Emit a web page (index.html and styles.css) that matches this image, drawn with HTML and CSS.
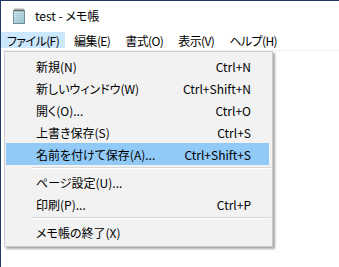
FILE: index.html
```html
<!DOCTYPE html>
<html>
<head>
    <meta charset="utf-8">
    <title>test - メモ帳</title>
    <link rel="stylesheet" href="styles.css">
</head>
<body>
<div class="window">
    <div class="titlebar">
        <svg class="appicon" width="14" height="16" viewBox="0 0 14 16">
            <defs>
                <linearGradient id="pad" x1="0" y1="0" x2="1" y2="1">
                    <stop offset="0" stop-color="#d9eef3"/>
                    <stop offset="1" stop-color="#8fc0cf"/>
                </linearGradient>
            </defs>
            <rect x="1.5" y="2.5" width="11" height="13" fill="url(#pad)" stroke="#6f8f9a"/>
            <path d="M3 5.5h8M3 7.5h8M3 9.5h8M3 11.5h8M3 13.5h6" stroke="#a9c9d2" stroke-width="0.8"/>
            <path d="M3 0.5v3M5 0.5v3M7 0.5v3M9 0.5v3M11 0.5v3" stroke="#555" stroke-width="1"/>
        </svg>
        <span class="title">test - メモ帳</span>
    </div>
    <nav class="menubar">
        <span class="menu active">ファイル(F)</span>
        <span class="menu">編集(E)</span>
        <span class="menu">書式(O)</span>
        <span class="menu">表示(V)</span>
        <span class="menu">ヘルプ(H)</span>
    </nav>
    <main class="editor"></main>

    <div class="dropdown">
        <div class="item"><span>新規(N)</span><span>Ctrl+N</span></div>
        <div class="item"><span>新しいウィンドウ(W)</span><span>Ctrl+Shift+N</span></div>
        <div class="item"><span>開く(O)...</span><span>Ctrl+O</span></div>
        <div class="item"><span>上書き保存(S)</span><span>Ctrl+S</span></div>
        <div class="item hover"><span>名前を付けて保存(A)...</span><span>Ctrl+Shift+S</span></div>
        <div class="sep"></div>
        <div class="item"><span>ページ設定(U)...</span><span></span></div>
        <div class="item"><span>印刷(P)...</span><span>Ctrl+P</span></div>
        <div class="sep"></div>
        <div class="item"><span>メモ帳の終了(X)</span><span></span></div>
    </div>
</div>
</body>
</html>
```

FILE: styles.css
```css
html, body {
    margin: 0;
    height: 100%;
    background: #fff;
}

body {
    font-family: "Noto Sans CJK JP", "Noto Sans", sans-serif;
    font-size: 12px;
    font-feature-settings: "palt";
    color: #000;
}

.window {
    position: relative;
    height: 100%;
    box-sizing: border-box;
    border-top: 1px solid #1d3d66;
    border-left: 1px solid #1d3d66;
    background: #fff;
}

.titlebar {
    height: 30px;
    display: flex;
    align-items: center;
    padding-left: 11px;
}

.appicon {
    margin-right: 9px;
    margin-top: -1px;
}

.title {
    font-size: 12px;
    line-height: 16px;
}

.menubar {
    display: flex;
    height: 19px;
    border-bottom: 1px solid #f0f0f0;
    letter-spacing: -0.6px;
}

.menu {
    padding: 0 6px;
    margin-right: 3px;
    line-height: 17px;
    margin-top: 1px;
    height: 16px;
    white-space: nowrap;
}

.menu.active {
    background: #cce8ff;
}

.editor {
    height: 200px;
}

.dropdown {
    position: absolute;
    left: 3px;
    top: 50px;
    width: 263px;
    padding: 3px 3px 3px 1px;
    background: #f2f2f2;
    border: 1px solid #cccccc;
    box-shadow: 2px 2px 2px rgba(0, 0, 0, 0.35);
}

.item {
    display: flex;
    justify-content: space-between;
    align-items: center;
    height: 22px;
    padding: 0 18px 0 30px;
    white-space: nowrap;
}

.item.hover {
    background: #91c9f7;
}

.sep {
    height: 6px;
    margin-left: 26px;
    position: relative;
}

.sep::after {
    content: "";
    position: absolute;
    left: 0;
    right: -2px;
    top: 2px;
    border-top: 1px solid #d7d7d7;
    border-bottom: 1px solid #ffffff;
}
```
